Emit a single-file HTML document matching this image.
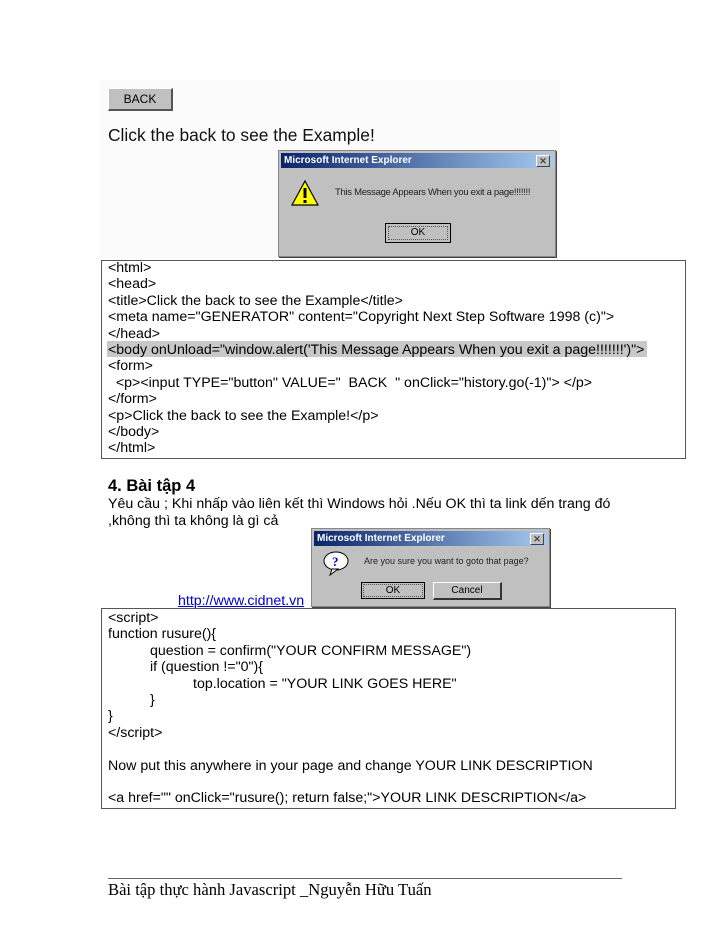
<!DOCTYPE html>
<html><head><meta charset="utf-8"><style>
body{margin:0;width:728px;height:943px;background:#fff;position:relative;font-family:"Liberation Sans",Arial,sans-serif;overflow:hidden}
.a{position:absolute;white-space:pre}
.c{font-size:14.2px;line-height:16.4px;color:#000}
.box{position:absolute;border:1px solid #555;background:#fff}
.dlg{position:absolute;background:#c0c0c0;border:1px solid #888;box-shadow:1px 1px 0 #444}
.tb{position:absolute;left:2px;right:2px;top:2px;height:15px;background:linear-gradient(90deg,#0a246a,#a6caf0);color:#fff;font-weight:bold;font-size:10px;line-height:15px;padding-left:3px}
.x{position:absolute;right:3px;top:2px;width:12px;height:10px;background:#c0c0c0;border:1px solid #fff;border-right-color:#444;border-bottom-color:#444;font-size:9px;line-height:10px;text-align:center;color:#444}
.btn{position:absolute;background:#c0c0c0;border:1px solid #fff;border-right-color:#333;border-bottom-color:#333;font-size:10px;text-align:center;color:#000}
.i1{padding-left:42px}.i2{padding-left:85px}
</style></head><body>
<div class="a" style="left:100px;top:80px;width:460px;height:178px;background:#fbfbfb"></div>
<div class="btn" style="left:108px;top:88px;width:62px;height:20px;line-height:20px;font-size:12px;border-right:2px solid #555;border-bottom:2px solid #555">BACK</div>
<div class="a" style="left:108px;top:125px;font-size:17.4px;color:#111">Click the back to see the Example!</div>
<div class="dlg" style="left:278px;top:150px;width:276px;height:105px">
<div class="tb">Microsoft Internet Explorer<div class="x">✕</div></div>
<svg style="position:absolute;left:12px;top:29px" width="28" height="26"><polygon points="14,1 27,25 1,25" fill="#ff0" stroke="#000" stroke-width="1.2"/><rect x="12.5" y="8" width="3" height="10" fill="#000"/><rect x="12.5" y="20" width="3" height="3" fill="#000"/></svg>
<div class="a" style="left:56px;top:36px;font-size:9.5px;letter-spacing:-0.3px;color:#222">This Message Appears When you exit a page!!!!!!!</div>
<div class="btn" style="left:106px;top:72px;width:64px;height:18px;line-height:18px;border:1px solid #000;outline:1px dotted #555;outline-offset:-4px">OK</div>
</div>

<div class="box" style="left:101px;top:260px;width:583px;height:197px"></div>
<div class="a" style="left:107px;top:341px;width:540px;height:16px;background:#c8c8c8"></div>
<div class="a c" style="left:108px;top:260px">&lt;html&gt;
&lt;head&gt;
&lt;title&gt;Click the back to see the Example&lt;/title&gt;
&lt;meta name="GENERATOR" content="Copyright Next Step Software 1998 (c)"&gt;
&lt;/head&gt;
&lt;body onUnload="window.alert('This Message Appears When you exit a page!!!!!!!')"&gt;
&lt;form&gt;
  &lt;p&gt;&lt;input TYPE="button" VALUE="  BACK  " onClick="history.go(-1)"&gt; &lt;/p&gt;
&lt;/form&gt;
&lt;p&gt;Click the back to see the Example!&lt;/p&gt;
&lt;/body&gt;
&lt;/html&gt;</div>

<div class="a" style="left:108px;top:477px;font-size:16.5px;font-weight:bold">4. Bài tập 4</div>
<div class="a c" style="left:108px;top:496px;line-height:16.5px">Yêu cầu ; Khi nhấp vào liên kết thì Windows hỏi .Nếu OK thì ta link dến trang đó
,không thì ta không là gì cả</div>

<div class="dlg" style="left:311px;top:528px;width:237px;height:77px">
<div class="tb">Microsoft Internet Explorer<div class="x">✕</div></div>
<svg style="position:absolute;left:10px;top:21px" width="28" height="26"><ellipse cx="14" cy="11" rx="12" ry="9" fill="#fff" stroke="#000"/><polygon points="10,19 8,25 16,19" fill="#fff" stroke="#000"/><text x="10" y="16" font-size="13" font-weight="bold" fill="#00c" font-family="Liberation Serif">?</text></svg>
<div class="a" style="left:52px;top:27px;font-size:9px;color:#222">Are you sure you want to goto that page?</div>
<div class="btn" style="left:49px;top:53px;width:62px;height:15px;line-height:15px;border:1px solid #000;outline:1px dotted #555;outline-offset:-3px">OK</div>
<div class="btn" style="left:121px;top:53px;width:66px;height:15px;line-height:15px;border-right:2px solid #333;border-bottom:2px solid #333">Cancel</div>
</div>
<div class="a" style="left:178px;top:593px;font-size:14.2px;color:#0000cc;text-decoration:underline">http://www.cidnet.vn</div>

<div class="box" style="left:101px;top:608px;width:573px;height:199px"></div>
<div class="a c" style="left:108px;top:610px">&lt;script&gt;
function rusure(){
<span class="i1">question = confirm("YOUR CONFIRM MESSAGE")</span>
<span class="i1">if (question !="0"){</span>
<span class="i2">top.location = "YOUR LINK GOES HERE"</span>
<span class="i1">}</span>
}
&lt;/script&gt;

Now put this anywhere in your page and change YOUR LINK DESCRIPTION

&lt;a href="" onClick="rusure(); return false;"&gt;YOUR LINK DESCRIPTION&lt;/a&gt;</div>

<div class="a" style="left:108px;top:878px;width:514px;height:1px;background:#666"></div>
<div class="a" style="left:108px;top:880px;font-family:'Liberation Serif',serif;font-size:16.6px">Bài tập thực hành Javascript _Nguyễn Hữu Tuấn</div>
</body></html>
